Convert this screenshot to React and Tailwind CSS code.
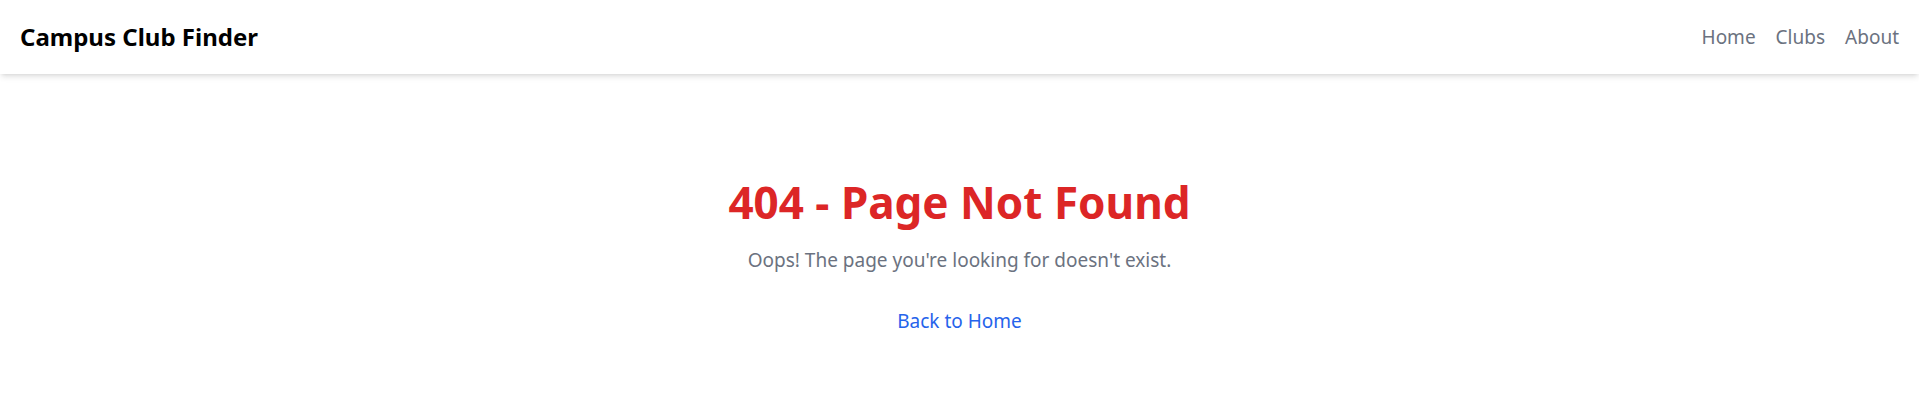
export default function App() {
  return (
    <div className="min-h-screen bg-white" style={{ fontFamily: '"Noto Sans", "Open Sans", sans-serif' }}>
      <header className="flex h-[74px] items-center justify-between bg-white px-5 shadow-md">
        <h1 className="text-[24px] font-bold text-black">Campus Club Finder</h1>
        <nav className="flex items-center gap-5 text-[19px] text-[#6b7280]">
          <a href="#">Home</a>
          <a href="#">Clubs</a>
          <a href="#">About</a>
        </nav>
      </header>

      <main className="flex flex-col items-center pt-[100px] text-center">
        <h2 className="text-[44px] font-bold leading-[56px] text-[#dc2626]">404 - Page Not Found</h2>
        <p className="mt-[16px] text-[19px] text-[#6b7280]">Oops! The page you're looking for doesn't exist.</p>
        <a href="#" className="mt-[32px] text-[19px] text-[#2563eb]">Back to Home</a>
      </main>
    </div>
  );
}
